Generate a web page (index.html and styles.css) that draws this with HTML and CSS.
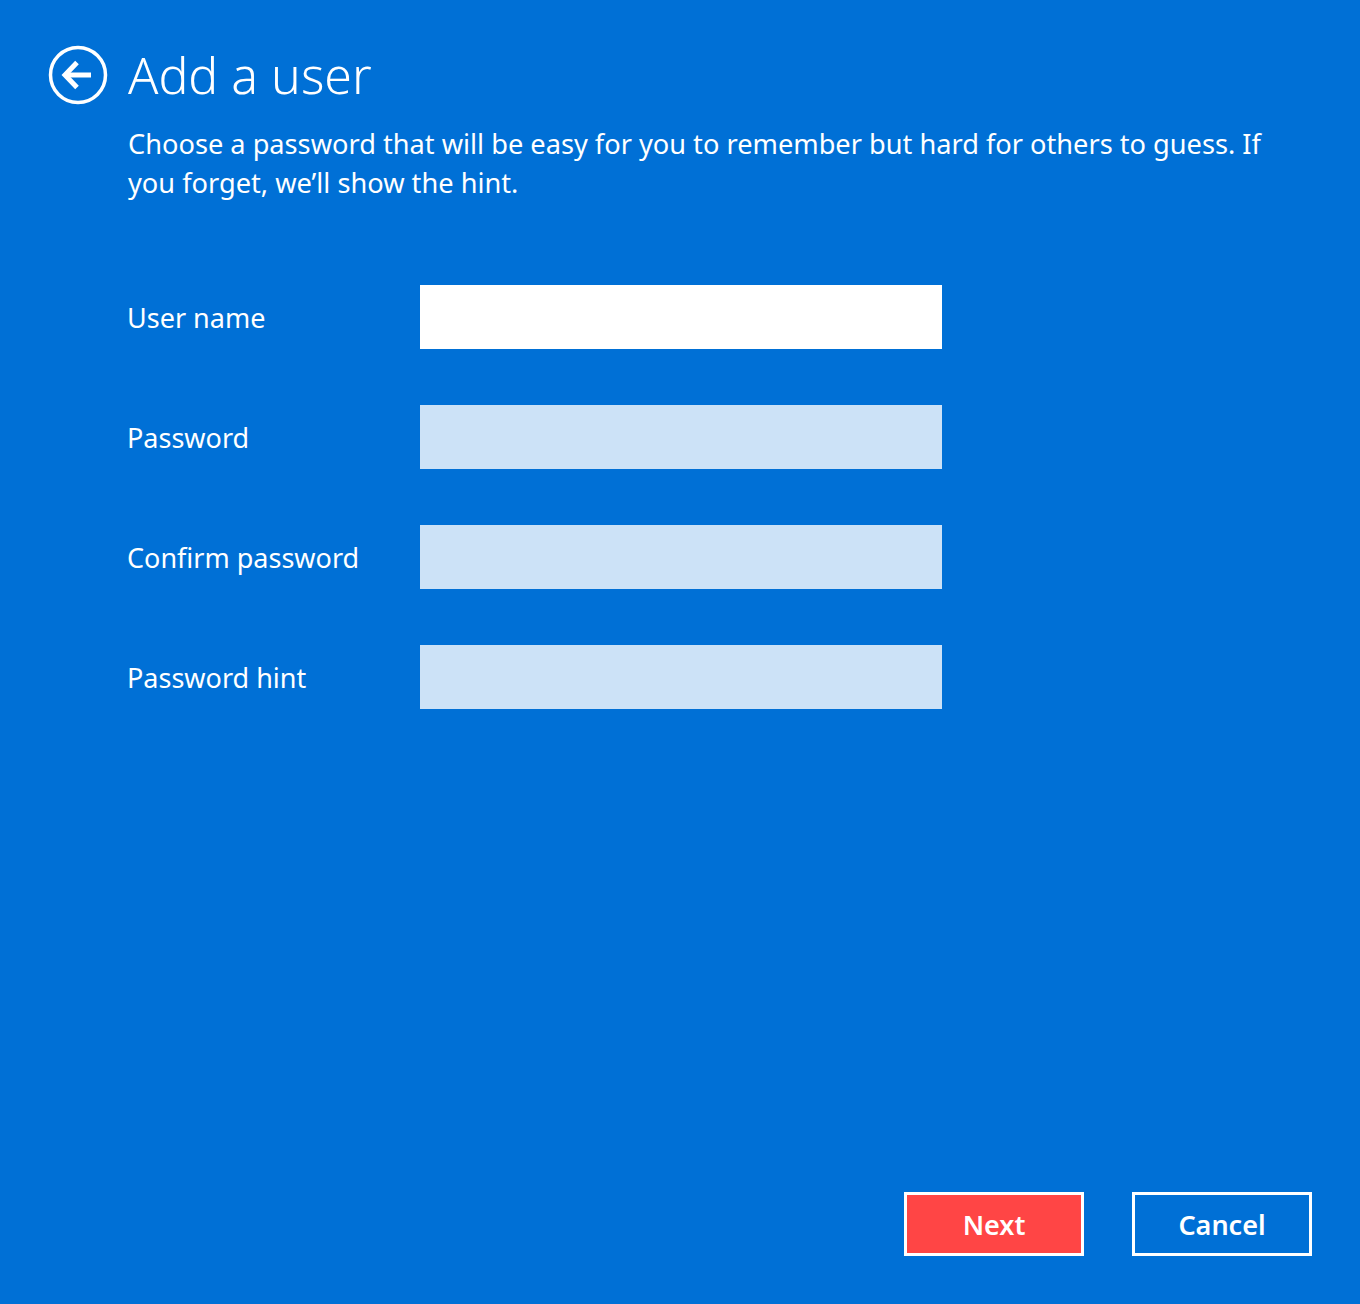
FILE: index.html
```html
<!DOCTYPE html>
<html lang="en">
<head>
<meta charset="UTF-8">
<title>Add a user</title>
<link rel="stylesheet" href="styles.css">
</head>
<body>
<div class="page">
  <div class="header">
    <button class="back" aria-label="Back">
      <svg width="60" height="60" viewBox="0 0 60 60">
        <circle cx="30" cy="30" r="27.5" fill="none" stroke="#fff" stroke-width="3.5"/>
        <path d="M17 30 H43" stroke="#fff" stroke-width="5" fill="none"/>
        <path d="M29 17.5 L17 30 L29 42.5" stroke="#fff" stroke-width="5" fill="none" stroke-linejoin="miter"/>
      </svg>
    </button>
    <h1>Add a user</h1>
  </div>
  <p class="intro">Choose a password that will be easy for you to remember but hard for others to guess. If you forget, we’ll show the hint.</p>

  <div class="form">
    <div class="row">
      <label for="user">User name</label>
      <input id="user" type="text" class="field active">
    </div>
    <div class="row">
      <label for="pw">Password</label>
      <input id="pw" type="password" class="field">
    </div>
    <div class="row">
      <label for="pw2">Confirm password</label>
      <input id="pw2" type="password" class="field">
    </div>
    <div class="row">
      <label for="hint">Password hint</label>
      <input id="hint" type="text" class="field">
    </div>
  </div>

  <div class="footer">
    <button class="btn next">Next</button>
    <button class="btn cancel">Cancel</button>
  </div>
</div>
</body>
</html>
```
FILE: styles.css
```css
body, html {
  height: 100%;
  margin: 0;
  background: #0070d6;
  color: #fff;
  font-family: "Noto Sans", "Open Sans", sans-serif;
}

.page {
  box-sizing: border-box;
  min-height: 100%;
  display: flex;
  flex-direction: column;
  padding: 44px 48px 48px 48px;
}

.header {
  display: flex;
  align-items: center;
  gap: 20px;
}

.back {
  width: 60px;
  height: 60px;
  padding: 0;
  border: 0;
  background: none;
  display: flex;
}

.header h1 {
  margin: 0;
  font-size: 50px;
  font-weight: 300;
  line-height: 62px;
}

.intro {
  margin: 18px 0 0 80px;
  font-size: 27.2px;
  line-height: 39px;
  max-width: 1150px;
}

.form {
  margin: 83px 0 0 79px;
  display: flex;
  flex-direction: column;
  gap: 56px;
}

.row {
  display: flex;
  align-items: center;
}

.row label {
  width: 293px;
  font-size: 27px;
}

.field {
  width: 522px;
  height: 64px;
  box-sizing: border-box;
  border: 0;
  margin: 0;
  background: #cce2f7;
  font-size: 24px;
  padding: 0 12px;
}

.field.active {
  background: #fff;
}

.footer {
  margin-top: auto;
  display: flex;
  justify-content: flex-end;
  gap: 48px;
}

.btn {
  width: 180px;
  height: 64px;
  border: 3px solid #fff;
  color: #fff;
  font-family: "Noto Sans", "Open Sans", sans-serif;
  font-size: 27px;
  font-weight: 600;
}

.next {
  background: #ff4545;
}

.cancel {
  background: #0070d6;
}
```
